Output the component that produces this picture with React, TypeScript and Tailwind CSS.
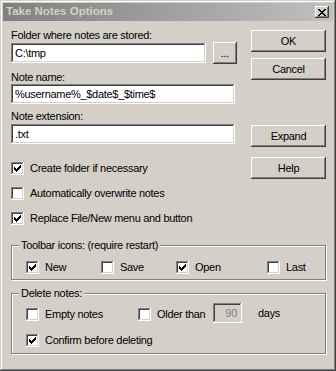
import React from 'react';

const raised =
  'shadow-[inset_-1px_-1px_#404040,inset_1px_1px_#ffffff,inset_-2px_-2px_#808080,inset_2px_2px_#d4d0c8]';
const sunken =
  'shadow-[inset_-1px_-1px_#ffffff,inset_1px_1px_#808080,inset_-2px_-2px_#d4d0c8,inset_2px_2px_#404040]';

const Btn = ({ label, className = '' }: { label: string; className?: string }) => (
  <div className={`h-[22px] flex items-center justify-center bg-[#d4d0c8] ${raised} ${className}`}>
    {label}
  </div>
);

const TextBox = ({ value, className = '' }: { value: string; className?: string }) => (
  <div className={`h-[20px] bg-white ${sunken} flex items-center pl-[4px] overflow-hidden whitespace-nowrap ${className}`}>
    {value}
  </div>
);

// classic 7-column check mark, 3px tall columns
const checkCols = [5, 6, 7, 6, 5, 4, 3];

const Check = ({ checked, label }: { checked?: boolean; label: string }) => (
  <div className="flex items-center gap-[6px] h-[13px]">
    <span className={`relative w-[13px] h-[13px] shrink-0 bg-white ${sunken}`}>
      {checked && (
        <svg className="absolute inset-0" width="13" height="13" shapeRendering="crispEdges">
          {checkCols.map((y, i) => (
            <rect key={i} x={3 + i} y={y} width="1" height="3" fill="#000" />
          ))}
        </svg>
      )}
    </span>
    <span className="leading-[13px] whitespace-nowrap">{label}</span>
  </div>
);

const Group = ({
  label,
  className = '',
  children,
}: {
  label: string;
  className?: string;
  children: React.ReactNode;
}) => (
  <div
    className={`relative border border-[#808080] shadow-[1px_1px_0_#ffffff,inset_1px_1px_0_#ffffff] ${className}`}
  >
    <span className="absolute left-[7px] top-[-7px] bg-[#d4d0c8] px-[2px] leading-[13px] whitespace-nowrap">
      {label}
    </span>
    {children}
  </div>
);

export default function App() {
  return (
    <div
      className={`w-[336px] h-[371px] bg-[#d4d0c8] p-[3px] text-black text-[11px] tracking-[-0.3px] font-['Liberation_Sans',Arial,sans-serif] shadow-[inset_-1px_-1px_#404040,inset_1px_1px_#d4d0c8,inset_-2px_-2px_#808080,inset_2px_2px_#ffffff]`}
    >
      {/* title bar */}
      <div className="h-[18px] flex items-center bg-linear-to-r from-[#808080] to-[#c0c0c0] pl-[3px] pr-[4px]">
        <span className="font-bold text-[11.5px] tracking-normal text-[#d4d0c8]">Take Notes Options</span>
        <div className={`ml-auto w-[14px] h-[12px] bg-[#d4d0c8] ${raised} flex items-center justify-center`}>
          <svg width="8" height="7" shapeRendering="crispEdges">
            <path
              d="M0 0h2v1H0zM6 0h2v1H6zM1 1h2v1H1zM5 1h2v1H5zM2 2h4v1H2zM3 3h2v1H3zM2 4h4v1H2zM1 5h2v1H1zM5 5h2v1H5zM0 6h2v1H0zM6 6h2v1H6z"
              fill="#000"
            />
          </svg>
        </div>
      </div>

      <div className="pl-[8px] pr-[7px]">
        <div className="flex">
          {/* left column */}
          <div className="w-[226px] flex flex-col pt-[8px]">
            <div className="h-[13px] leading-[13px]">Folder where notes are stored:</div>
            <div className="h-[22px] flex items-center">
              <TextBox value="C:\tmp" className="w-[195px]" />
              <Btn label="..." className="ml-auto w-[24px]" />
            </div>
            <div className="mt-[7px] h-[13px] leading-[13px]">Note name:</div>
            <TextBox value="%username%_$date$_$time$" className="w-[224px]" />
            <div className="mt-[6px] h-[13px] leading-[13px]">Note extension:</div>
            <TextBox value=".txt" className="mt-[1px] w-[224px]" />
            <div className="mt-[18px] flex flex-col gap-[12px]">
              <Check checked label="Create folder if necessary" />
              <Check label="Automatically overwrite notes" />
              <Check checked label="Replace File/New menu and button" />
            </div>
          </div>

          {/* right column */}
          <div className="ml-[14px] w-[75px] flex flex-col pt-[9px]">
            <Btn label="OK" />
            <Btn label="Cancel" className="mt-[6px]" />
            <Btn label="Expand" className="mt-[45px]" />
            <Btn label="Help" className="mt-[10px]" />
          </div>
        </div>

        <Group label="Toolbar icons: (require restart)" className="mt-[20px] w-[315px] h-[35px]">
          <div className="flex pl-[14px] pt-[15px]">
            <div className="w-[75px]">
              <Check checked label="New" />
            </div>
            <div className="w-[75px]">
              <Check label="Save" />
            </div>
            <div className="w-[91px]">
              <Check checked label="Open" />
            </div>
            <Check label="Last" />
          </div>
        </Group>

        <Group label="Delete notes:" className="mt-[13px] w-[315px] h-[61px]">
          <div className="pl-[14px] pt-[9px]">
            <div className="flex items-start h-[20px]">
              <div className="w-[112px] mt-[5px]">
                <Check label="Empty notes" />
              </div>
              <div className="flex items-center gap-[6px] h-[13px] mt-[5px]">
                <span className={`relative w-[13px] h-[13px] shrink-0 bg-white ${sunken}`} />
                <span className="w-[56px] leading-[13px] whitespace-nowrap">Older than</span>
              </div>
              <div
                className={`w-[29px] h-[20px] bg-[#d4d0c8] ${sunken} flex items-center justify-end pr-[5px] text-[#808080]`}
              >
                90
              </div>
              <div className="ml-[16px] mt-[4px] leading-[13px]">days</div>
            </div>
            <div className="mt-[11px]">
              <Check checked label="Confirm before deleting" />
            </div>
          </div>
        </Group>
      </div>
    </div>
  );
}
